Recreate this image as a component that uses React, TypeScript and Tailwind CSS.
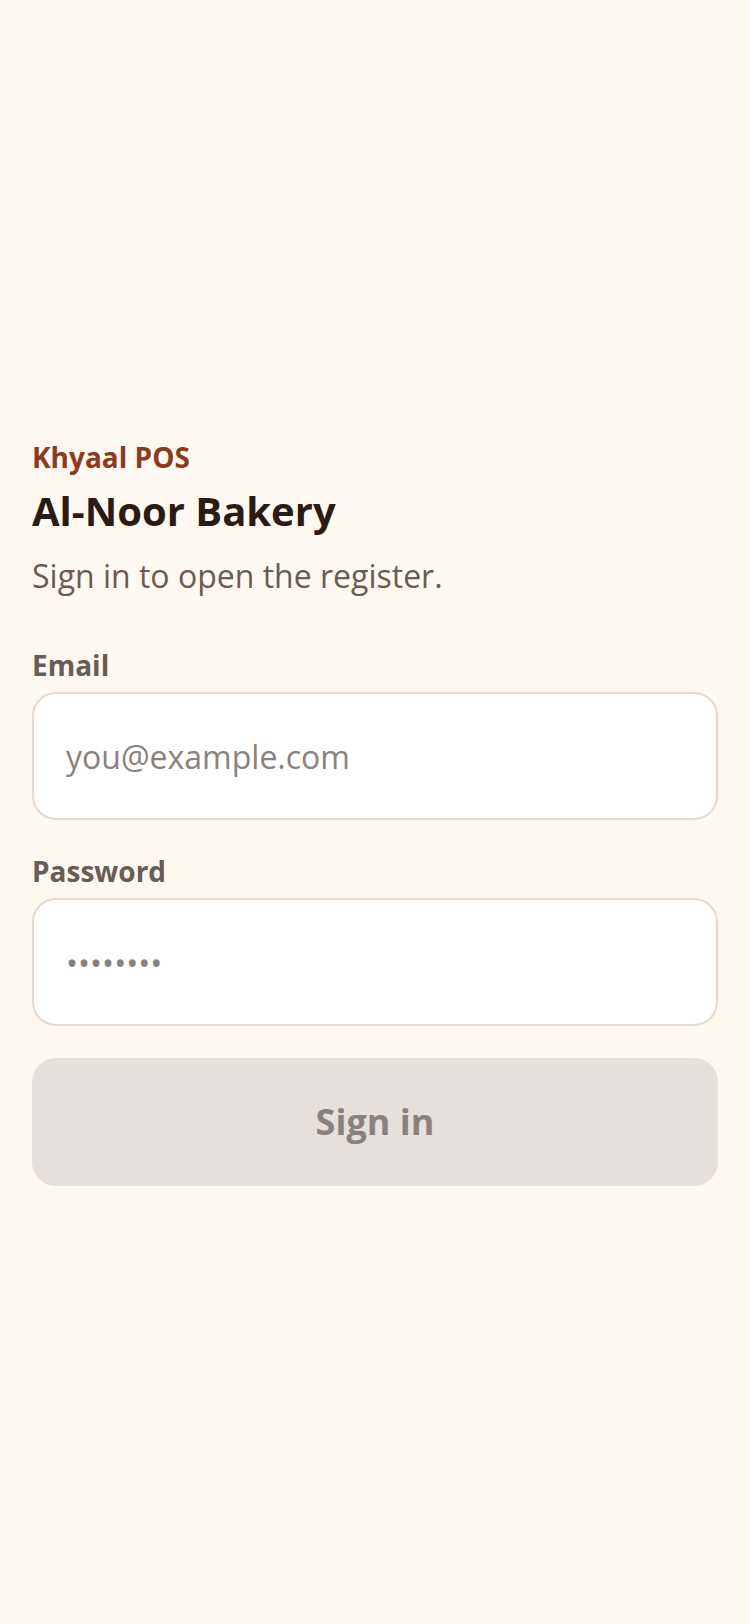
import React, { useState } from 'react';

export default function App() {
  const [email, setEmail] = useState('');
  const [password, setPassword] = useState('');

  const canSubmit = email.trim() !== '' && password !== '';

  const handleSubmit = (e: React.FormEvent) => {
    e.preventDefault();
  };

  return (
    <main className="min-h-screen bg-[#fff8f0] px-8 flex flex-col justify-center font-['Open_Sans',sans-serif]">
      {/* Shop header */}
      <header>
        <p className="text-[28px] leading-[38px] font-bold text-[#8b3a1e]">Khyaal POS</p>
        <h1 className="mt-2 text-[40px] leading-[54px] font-bold text-[#2c1a14]">Al-Noor Bakery</h1>
        <p className="mt-4 text-[32px] leading-[44px] text-[#6b5b52]">Sign in to open the register.</p>
      </header>

      <form onSubmit={handleSubmit} className="mt-12 flex flex-col gap-8">
        <div className="flex flex-col gap-2">
          <label htmlFor="email" className="text-[28px] leading-[38px] font-bold text-[#6b5b52]">Email</label>
          <input
            id="email"
            type="email"
            placeholder="you@example.com"
            value={email}
            onChange={(e) => setEmail(e.target.value)}
            className="h-32 w-full rounded-3xl border-2 border-[#e5d8cd] bg-white px-8 text-[32px] text-[#2c1a14] placeholder:text-[#8a817c] focus:outline-none focus:border-[#8b3a1e]"
          />
        </div>

        <div className="flex flex-col gap-2">
          <label htmlFor="password" className="text-[28px] leading-[38px] font-bold text-[#6b5b52]">Password</label>
          <input
            id="password"
            type="password"
            placeholder="••••••••"
            value={password}
            onChange={(e) => setPassword(e.target.value)}
            className="h-32 w-full rounded-3xl border-2 border-[#e5d8cd] bg-white px-8 text-[32px] text-[#2c1a14] placeholder:text-[#8a817c] focus:outline-none focus:border-[#8b3a1e]"
          />
        </div>

        <button
          type="submit"
          disabled={!canSubmit}
          className="h-32 w-full rounded-3xl bg-[#8b3a1e] text-[36px] font-bold text-white disabled:bg-[#e5e0dc] disabled:text-[#8a817c]"
        >
          Sign in
        </button>
      </form>
    </main>
  );
}
